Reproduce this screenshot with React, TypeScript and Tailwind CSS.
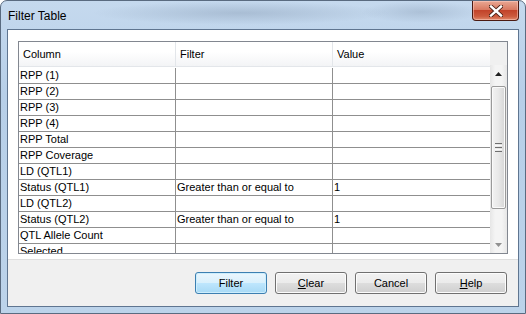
import React from "react";

const rows: [string, string, string][] = [
  ["RPP (1)", "", ""],
  ["RPP (2)", "", ""],
  ["RPP (3)", "", ""],
  ["RPP (4)", "", ""],
  ["RPP Total", "", ""],
  ["RPP Coverage", "", ""],
  ["LD (QTL1)", "", ""],
  ["Status (QTL1)", "Greater than or equal to", "1"],
  ["LD (QTL2)", "", ""],
  ["Status (QTL2)", "Greater than or equal to", "1"],
  ["QTL Allele Count", "", ""],
  ["Selected", "", ""],
];

function Btn({ children, primary }: { children: React.ReactNode; primary?: boolean }) {
  return (
    <div
      className={
        "w-[72px] h-[22px] rounded-[3px] border flex items-center justify-center text-[11px] text-black " +
        (primary
          ? "border-[#3c7fb1] bg-[linear-gradient(to_bottom,#eaf6fd_0%,#d9f0fc_50%,#bee6fd_51%,#a7d9f5_100%)] shadow-[inset_0_0_0_1px_#cdeefd]"
          : "border-[#707070] bg-[linear-gradient(to_bottom,#f2f2f2_0%,#ebebeb_50%,#dddddd_51%,#cfcfcf_100%)] shadow-[inset_0_0_0_1px_#fcfcfc]")
      }
    >
      {children}
    </div>
  );
}

export default function App() {
  return (
    <div
      className="w-[526px] h-[314px] overflow-hidden relative rounded-t-[7px] border border-[#5a6b80] bg-[linear-gradient(to_bottom,#c5d9ee_0%,#b7cfe8_30%,#bcd3ea_100%)] flex flex-col"
      style={{ fontFamily: '"Liberation Sans", Arial, sans-serif' }}
    >
      {/* blurred glass spots */}
      <div className="absolute left-[90px] top-[0px] w-[300px] h-[24px] bg-[radial-gradient(ellipse_at_center,rgba(120,140,165,0.35),transparent_70%)]" />
      <div className="absolute left-[360px] top-[0px] w-[120px] h-[22px] bg-[radial-gradient(ellipse_at_center,rgba(120,140,165,0.3),transparent_70%)]" />
      {/* title bar */}
      <div className="h-[28px] flex items-start justify-between relative">
        <div className="pl-[7px] pt-[7px] text-[12px] text-black leading-[16px]" style={{ fontFamily: '"Segoe UI", "Liberation Sans", Arial, sans-serif' }}>
          Filter Table
        </div>
        <div className="mr-[6px] w-[47px] h-[20px] rounded-b-[4px] border border-t-0 border-[#4b1a12] bg-[linear-gradient(to_bottom,#e9a894_0%,#d97a62_45%,#c2432a_50%,#cc5a3d_80%,#e08a6c_100%)] shadow-[inset_0_0_0_1px_rgba(255,210,200,0.5)] flex items-center justify-center">
          <svg width="14" height="12" viewBox="0 0 14 12">
            <path d="M2 1.5 L12 10.5 M12 1.5 L2 10.5" stroke="#4a2015" strokeWidth="4.2" strokeLinecap="square" />
            <path d="M2 1.5 L12 10.5 M12 1.5 L2 10.5" stroke="#ffffff" strokeWidth="2.4" strokeLinecap="square" />
          </svg>
        </div>
      </div>
      {/* client area */}
      <div className="ml-[6px] mr-[6px] h-[278px] border border-[#5f7590] bg-[#f0f0f0] flex flex-col">
        <div className="h-[230px] bg-white border-b border-[#dfdfdf] pl-[10px] pr-[11px] pt-[11px]">
          <div className="w-[490px] h-[213px] border border-[#828790] flex overflow-hidden">
            <div className="flex-1 flex flex-col min-w-0">
              {/* header */}
              <div className="h-[25px] flex text-[11px] text-black bg-[linear-gradient(to_bottom,#ffffff_0%,#ffffff_40%,#f3f4f6_100%)] border-b border-[#e3e6ea] shrink-0">
                <div className="w-[157px] border-r border-[#e3e6ea] pl-[4px] flex items-center">Column</div>
                <div className="w-[157px] border-r border-[#e3e6ea] pl-[4px] flex items-center">Filter</div>
                <div className="flex-1 pl-[4px] flex items-center">Value</div>
              </div>
              <div className="h-[1px] shrink-0" />
              {rows.map((r, i) => (
                <div key={i} className="h-[16px] shrink-0 flex text-[11px] text-black border-b border-[#8f8f8f] leading-[15px]">
                  <div className="w-[157px] border-r border-[#8f8f8f] pl-[1px] whitespace-nowrap overflow-hidden">{r[0]}</div>
                  <div className="w-[157px] border-r border-[#8f8f8f] pl-[1px] whitespace-nowrap overflow-hidden">{r[1]}</div>
                  <div className="flex-1 pl-[1px] whitespace-nowrap overflow-hidden">{r[2]}</div>
                </div>
              ))}
            </div>
            {/* scrollbar */}
            <div className="w-[17px] flex flex-col shrink-0">
              <div className="h-[23px] bg-[#f0f0f0] shrink-0" />
              <div className="flex-1 bg-[linear-gradient(to_right,#e6e6e6,#f4f4f4_30%,#f4f4f4_70%,#e6e6e6)] flex flex-col items-center">
                <div className="h-[17px] w-full flex items-center justify-center shrink-0">
                  <svg width="7" height="4" viewBox="0 0 7 4"><path d="M3.5 0 L7 4 L0 4 Z" fill="#202020" /></svg>
                </div>
                <div className="mt-[4px] w-[15px] h-[123px] rounded-[2px] border border-[#9a9a9a] bg-[linear-gradient(to_right,#f3f3f3,#e8e8e8_50%,#d6d6d6)] shadow-[inset_0_0_0_1px_#fafafa] flex flex-col items-center justify-center gap-[1px] shrink-0">
                  <div className="w-[7px] h-[1px] bg-[#6f6f6f]" />
                  <div className="w-[7px] h-[1px] bg-[#fafafa]" />
                  <div className="w-[7px] h-[1px] bg-[#6f6f6f]" />
                  <div className="w-[7px] h-[1px] bg-[#fafafa]" />
                  <div className="w-[7px] h-[1px] bg-[#6f6f6f]" />
                </div>
                <div className="flex-1" />
                <div className="h-[17px] w-full flex items-center justify-center shrink-0">
                  <svg width="7" height="4" viewBox="0 0 7 4"><path d="M0 0 L7 0 L3.5 4 Z" fill="#909090" /></svg>
                </div>
              </div>
            </div>
          </div>
        </div>
        <div className="flex-1 flex items-start justify-end gap-[8px] pr-[11px] pt-[12px]">
          <Btn primary>Filter</Btn>
          <Btn><span><span className="underline">C</span>lear</span></Btn>
          <Btn>Cancel</Btn>
          <Btn><span><span className="underline">H</span>elp</span></Btn>
        </div>
      </div>
    </div>
  );
}
